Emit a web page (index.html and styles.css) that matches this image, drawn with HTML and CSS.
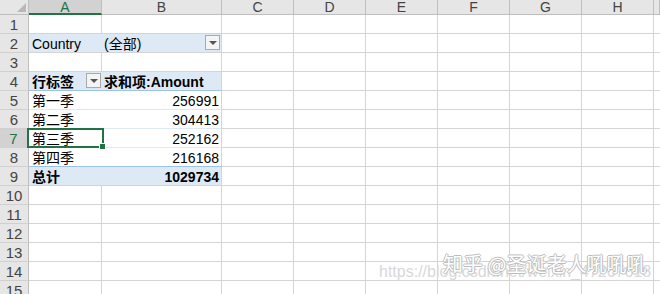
FILE: index.html
```html
<!DOCTYPE html>
<html>
<head>
<meta charset="utf-8">
<link rel="stylesheet" href="styles.css">
</head>
<body>
<div class="sheet">
  <div class="hd corner"><span class="tri"></span></div>
  <div class="hd col sel-col">A</div>
  <div class="hd col">B</div>
  <div class="hd col">C</div>
  <div class="hd col">D</div>
  <div class="hd col">E</div>
  <div class="hd col">F</div>
  <div class="hd col">G</div>
  <div class="hd col">H</div>
  <div class="hd col"></div>

  <div class="hd rn">1</div><div class="c"></div><div class="c"></div><div class="c"></div><div class="c"></div><div class="c"></div><div class="c"></div><div class="c"></div><div class="c"></div><div class="c"></div>

  <div class="hd rn">2</div>
  <div class="c pv pa">Country</div>
  <div class="c pv pb filter">(全部)<span class="dd"></span></div>
  <div class="c"></div><div class="c"></div><div class="c"></div><div class="c"></div><div class="c"></div><div class="c"></div><div class="c"></div>

  <div class="hd rn">3</div><div class="c"></div><div class="c"></div><div class="c"></div><div class="c"></div><div class="c"></div><div class="c"></div><div class="c"></div><div class="c"></div><div class="c"></div>

  <div class="hd rn">4</div>
  <div class="c pv pa b head filter">行标签<span class="dd"></span></div>
  <div class="c pv pb b head">求和项:Amount</div>
  <div class="c"></div><div class="c"></div><div class="c"></div><div class="c"></div><div class="c"></div><div class="c"></div><div class="c"></div>

  <div class="hd rn">5</div>
  <div class="c pw pa">第一季</div>
  <div class="c pw pb num">256991</div>
  <div class="c"></div><div class="c"></div><div class="c"></div><div class="c"></div><div class="c"></div><div class="c"></div><div class="c"></div>

  <div class="hd rn">6</div>
  <div class="c pw pa">第二季</div>
  <div class="c pw pb num">304413</div>
  <div class="c"></div><div class="c"></div><div class="c"></div><div class="c"></div><div class="c"></div><div class="c"></div><div class="c"></div>

  <div class="hd rn sel-row">7</div>
  <div class="c pw pa active">第三季<span class="selbox"><span class="handle"></span></span></div>
  <div class="c pw pb num">252162</div>
  <div class="c"></div><div class="c"></div><div class="c"></div><div class="c"></div><div class="c"></div><div class="c"></div><div class="c"></div>

  <div class="hd rn">8</div>
  <div class="c pw pa last">第四季</div>
  <div class="c pw pb num last">216168</div>
  <div class="c"></div><div class="c"></div><div class="c"></div><div class="c"></div><div class="c"></div><div class="c"></div><div class="c"></div>

  <div class="hd rn">9</div>
  <div class="c pv pa b">总计</div>
  <div class="c pv pb b num">1029734</div>
  <div class="c"></div><div class="c"></div><div class="c"></div><div class="c"></div><div class="c"></div><div class="c"></div><div class="c"></div>

  <div class="hd rn">10</div><div class="c"></div><div class="c"></div><div class="c"></div><div class="c"></div><div class="c"></div><div class="c"></div><div class="c"></div><div class="c"></div><div class="c"></div>
  <div class="hd rn">11</div><div class="c"></div><div class="c"></div><div class="c"></div><div class="c"></div><div class="c"></div><div class="c"></div><div class="c"></div><div class="c"></div><div class="c"></div>
  <div class="hd rn">12</div><div class="c"></div><div class="c"></div><div class="c"></div><div class="c"></div><div class="c"></div><div class="c"></div><div class="c"></div><div class="c"></div><div class="c"></div>
  <div class="hd rn">13</div><div class="c"></div><div class="c"></div><div class="c"></div><div class="c"></div><div class="c"></div><div class="c"></div><div class="c"></div><div class="c"></div><div class="c"></div>
  <div class="hd rn">14</div><div class="c"></div><div class="c"></div><div class="c"></div><div class="c"></div><div class="c"></div><div class="c"></div><div class="c"></div><div class="c"></div><div class="c"></div>
  <div class="hd rn">15</div><div class="c"></div><div class="c"></div><div class="c"></div><div class="c"></div><div class="c"></div><div class="c"></div><div class="c"></div><div class="c"></div><div class="c"></div>
</div>
<div class="wm-url">https://blog.csdn.net/weixin_47267618</div>
<div class="wm-zh">知乎 @圣诞老人吼吼吼</div>
</body>
</html>
```

FILE: styles.css
```css
html, body {
  margin: 0;
  padding: 0;
  background: #fff;
  overflow: hidden;
  width: 660px;
  height: 294px;
}
body {
  position: relative;
  font-family: "Liberation Sans", "Noto Sans CJK SC", sans-serif;
  font-size: 14px;
  color: #000;
}
.sheet {
  display: grid;
  grid-template-columns: 29px 73px 120px repeat(6, 72px) 6px;
  grid-template-rows: 15px;
  grid-auto-rows: 19px;
}
.c {
  box-sizing: border-box;
  border-right: 1px solid #d4d4d4;
  border-bottom: 1px solid #d4d4d4;
  white-space: nowrap;
  overflow: visible;
  line-height: 17px;
  padding: 2px 3px 0;
  position: relative;
}
.hd {
  box-sizing: border-box;
  background: #e6e6e6;
  border-right: 1px solid #bebebe;
  border-bottom: 1px solid #bebebe;
  color: #444;
  text-align: center;
}
.col {
  font-size: 14px;
  line-height: 15px;
}
.rn {
  font-size: 15px;
  line-height: 19px;
  border-bottom-color: #d0d0d0;
  overflow: hidden;
}
.corner {
  position: relative;
  background: #e6e6e6;
}
.tri {
  position: absolute;
  right: 2px;
  bottom: 2px;
  width: 0;
  height: 0;
  border-left: 9px solid transparent;
  border-bottom: 9px solid #b8b8b8;
}
.sel-col {
  background: #d2d2d2;
  color: #217346;
  border-bottom: 2px solid #217346;
}
.sel-row {
  background: #d2d2d2;
  color: #217346;
  border-right: 2px solid #217346;
}
.pv {
  background: #dde9f5;
}
.pw {
  background: #fff;
  border-bottom-color: #dde9f5;
}
.pa {
  border-right: none;
}
.pb {
  padding-left: 2px;
  padding-right: 2px;
}
.head {
  border-bottom-color: #9dc3e6;
}
.last {
  border-bottom-color: #9dc3e6;
}
.b {
  font-weight: bold;
}
.num {
  text-align: right;
}
.filter .dd {
  position: absolute;
  right: 1px;
  top: 1px;
  width: 15px;
  height: 15px;
  box-sizing: border-box;
  border: 1px solid #a9a9a9;
  background: #f4f4f4;
}
.filter .dd::after {
  content: "";
  position: absolute;
  left: 3px;
  top: 5px;
  width: 0;
  height: 0;
  border-left: 4px solid transparent;
  border-right: 4px solid transparent;
  border-top: 4px solid #555;
}
.active {
  z-index: 3;
}
.selbox {
  position: absolute;
  left: -2px;
  top: -1px;
  right: -2px;
  bottom: -1px;
  border: 2px solid #217346;
  box-sizing: border-box;
}
.handle {
  position: absolute;
  right: -4px;
  bottom: -4px;
  width: 5px;
  height: 5px;
  background: #217346;
  border: 1px solid #fff;
}
.wm-url {
  position: absolute;
  left: 379px;
  top: 263px;
  font-size: 16px;
  color: #d8d8d8;
  white-space: nowrap;
}
.wm-zh {
  position: absolute;
  left: 443px;
  top: 249px;
  font-family: "Noto Sans CJK SC", sans-serif;
  font-size: 20px;
  color: #fff;
  white-space: nowrap;
  text-shadow: 1px 0 0 #bdbdbd, -1px 0 0 #bdbdbd, 0 1px 0 #bdbdbd, 0 -1px 0 #bdbdbd;
}
```
